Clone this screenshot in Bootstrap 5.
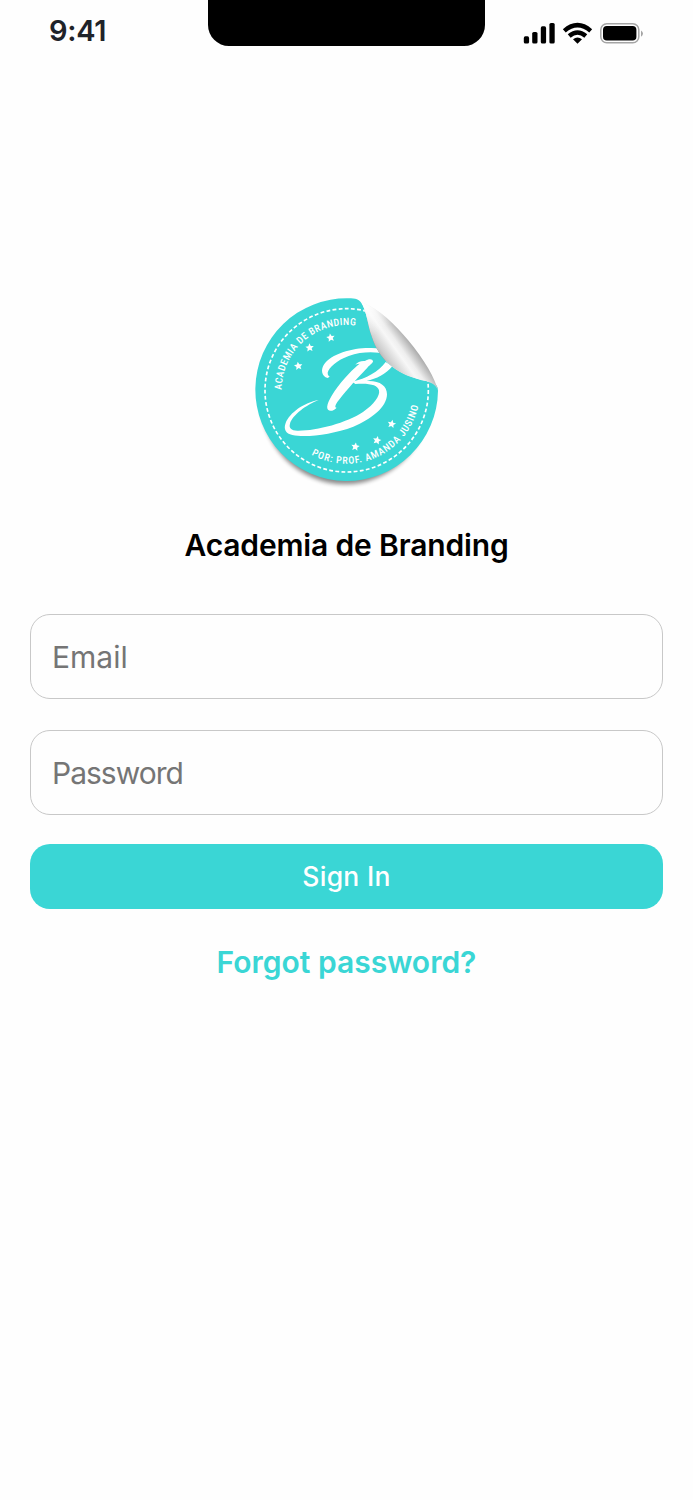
<!DOCTYPE html>
<html lang="en">
<head>
    <meta charset="UTF-8">
    <meta name="viewport" content="width=device-width, initial-scale=1.0">
    <title>Academia de Branding - Sign In</title>
    <link href="https://cdn.jsdelivr.net/npm/bootstrap@5.3.0/dist/css/bootstrap.min.css" rel="stylesheet">
    <style>
        body {
            background: #fefefe;
            font-family: Inter, "Liberation Sans", sans-serif;
            min-height: 1500px;
            overflow-x: hidden;
        }
        .status-bar {
            height: 46px;
        }
        .clock {
            width: 208px;
            padding: 9px 0 0 49px;
            font-size: 29px;
            line-height: 44px;
            font-weight: 600;
            color: #1f2329;
            letter-spacing: -0.3px;
        }
        .notch {
            width: 277px;
            height: 46px;
            background: #000;
            border-radius: 0 0 21px 21px;
        }
        .indicators {
            width: 208px;
        }
        .login {
            padding: 239px 30px 0;
        }
        .seal {
            margin-left: 2px;
        }
        .app-name {
            margin: 20px 0 44px;
            font-size: 30px;
            line-height: 50px;
            font-weight: 600;
            letter-spacing: -0.15px;
            color: #000;
        }
        .login .form-control {
            height: 85px;
            margin-bottom: 31px;
            padding: 0 21px;
            border: 1px solid #c8c8c8;
            border-radius: 20px;
            background: #fefefe;
            font-size: 30px;
        }
        .login .form-control::placeholder {
            color: #757575;
        }
        .login .form-control[type="password"] {
            letter-spacing: -1px;
        }
        .btn-brand, .btn-brand:hover {
            height: 65px;
            margin-top: -2px;
            padding: 0;
            border: 0;
            border-radius: 20px;
            background: #3ad6d5;
            color: #fff;
            font-size: 26.5px;
            font-weight: 500;
            letter-spacing: 0.3px;
        }
        .forgot {
            margin-top: 33px;
            font-size: 30px;
            line-height: 40px;
            font-weight: 600;
            color: #3ad6d5;
        }
        .seal-text {
            font-family: "Roboto Condensed", "Liberation Sans Narrow", Roboto, sans-serif;
            font-size: 30px;
            font-weight: 500;
            fill: #fff;
        }
    </style>
</head>
<body>
    <header class="status-bar d-flex">
        <div class="clock">9:41</div>
        <div class="notch"></div>
        <div class="indicators">
            <svg class="d-block" width="208" height="60" viewBox="485 0 208 60">
                <g fill="#000">
                    <rect x="523.8" y="36.3" width="5.3" height="7.2" rx="1.6"/>
                    <rect x="532.2" y="32" width="5.3" height="11.5" rx="1.6"/>
                    <rect x="540.8" y="26.3" width="5.3" height="17.2" rx="1.6"/>
                    <rect x="549.4" y="23" width="5.3" height="20.5" rx="1.6"/>
                </g>
                <!-- wifi -->
                <g fill="none" stroke="#000" stroke-width="4.4">
                    <path d="M564.3 30.8Q577.5 19.4 590.7 30.8"/>
                    <path d="M569.2 36Q577.5 28.9 585.8 36"/>
                </g>
                <path d="M573 39.3Q577.5 35.8 582 39.3L577.5 43.7Z"/>
                <!-- battery -->
                <rect x="600.8" y="23.8" width="38" height="19" rx="6" fill="none" stroke="#a5a5a5" stroke-width="1.5"/>
                <rect x="603" y="26" width="33.4" height="14.6" rx="3.8"/>
                <path d="M641 30.5Q645 33.5 641 36.8Z" fill="#a5a5a5"/>
            </svg>
        </div>
    </header>

    <main class="login d-flex flex-column align-items-center">
        <svg class="seal d-block" width="215" height="215" viewBox="0 0 645 645">
            <defs>
                <linearGradient id="fold" gradientUnits="userSpaceOnUse" x1="423" y1="222" x2="512" y2="158">
                    <stop offset="0" stop-color="#b2b2b2"/>
                    <stop offset=".16" stop-color="#cfcfcf"/>
                    <stop offset=".48" stop-color="#f7f7f7"/>
                    <stop offset=".62" stop-color="#eeeeee"/>
                    <stop offset="1" stop-color="#999"/>
                </linearGradient>
                <linearGradient id="foldTip" gradientUnits="userSpaceOnUse" x1="370" y1="55" x2="425" y2="135">
                    <stop offset="0" stop-color="#fff"/>
                    <stop offset="1" stop-color="#fff" stop-opacity="0"/>
                </linearGradient>
                <filter id="soft" x="-20%" y="-20%" width="140%" height="140%">
                    <feGaussianBlur stdDeviation="7"/>
                </filter>
                <path id="arcTop" d="M125 315A195 195 0 0 1 515 315"/>
                <path id="arcBottom" d="M214 509A220 220 0 0 0 540 317L539 290"/>
                <path id="star" d="M0-13 3.7-4.8 12.6-3.9 5.9 2.1 7.8 10.9 0 6.3-7.8 10.9-5.9 2.1-12.6-3.9-3.7-4.8Z"/>
                <clipPath id="sticker">
                    <path id="disc" d="M594 317A274 274 0 1 1 325 40C348 40 357 43 366 57C382 85 382 117 395 154C407 192 424 218 455 244C485 268 525 281 565 289C585 294 594 302 594 317Z"/>
                </clipPath>
            </defs>
            <ellipse cx="315" cy="343" rx="252" ry="255" fill="#000" opacity=".45" filter="url(#soft)"/>
            <path d="M360 38L600 200V320L455 270Z" fill="#fefefe"/>
            <use href="#disc" fill="#3ad6d5"/>
            <g clip-path="url(#sticker)">
                <circle cx="320" cy="316" r="245" fill="none" stroke="#fff" stroke-width="5" stroke-dasharray="11.5 7"/>
                <!-- letter mark -->
                <g fill="#fff">
                    <path d="M263 279C245 274 242 255 251 240C274 204 344 187 394 189C414 189 430 193 440 200L438 207C410 200 366 198 326 213C292 225 266 248 263 263Q262 272 269 275Z"/>
                    <path d="M375 228C385 221 398 220 399 229C399 234 390 240 382 248C344 287 309 328 292 351C285 361 284 369 290 368C283 376 270 381 264 374C256 365 270 339 284 318C310 280 343 248 359 236C354 236 350 237 346 239C352 232 362 227 375 228Z"/>
                    <path d="M437 231L457 244C438 267 409 282 380 288C419 286 441 302 441 328C441 366 393 404 340 425C276 449 199 458 157 450C137 446 130 432 137 414C149 383 192 353 236 345C199 359 157 391 150 416C146 429 154 436 172 437C229 438 319 414 369 381C402 359 421 332 417 316C413 300 390 294 346 297L337 290C378 281 416 260 437 231Z"/>
                </g>
            </g>
            <g fill="#fff">
                <use href="#star" transform="translate(175 243) rotate(-8)"/>
                <use href="#star" transform="translate(209 188) rotate(-4)"/>
                <use href="#star" transform="translate(272 158) rotate(-10)"/>
                <use href="#star" transform="translate(346 485) rotate(8)"/>
                <use href="#star" transform="translate(411 466) rotate(12)"/>
                <use href="#star" transform="translate(455 417) rotate(12)"/>
            </g>
            <text class="seal-text"><textPath href="#arcTop" textLength="333" lengthAdjust="spacing">ACADEMIA DE BRANDING</textPath></text>
            <text class="seal-text"><textPath href="#arcBottom" textLength="409" lengthAdjust="spacing">POR: PROF. AMANDA JUSINO</textPath></text>
            <path d="M364 51C418 72 465 118 504 165C555 227 584 278 595 319C588 300 577 294 560 289C520 281 482 267 455 244C424 218 407 192 395 154C382 117 382 85 364 51Z" fill="url(#fold)"/>
            <path d="M364 51C418 72 465 118 504 165L455 244C424 218 407 192 395 154C382 117 382 85 364 51Z" fill="url(#foldTip)"/>
        </svg>

        <h1 class="app-name text-center">Academia de Branding</h1>

        <form class="w-100 d-flex flex-column">
            <input type="email" class="form-control" placeholder="Email" aria-label="Email">
            <input type="password" class="form-control" placeholder="Password" aria-label="Password">
            <button type="button" class="btn btn-brand w-100">Sign In</button>
        </form>
        <a href="#" class="forgot text-decoration-none">Forgot password?</a>
    </main>

    <script src="https://cdn.jsdelivr.net/npm/bootstrap@5.3.0/dist/js/bootstrap.bundle.min.js"></script>
</body>
</html>
